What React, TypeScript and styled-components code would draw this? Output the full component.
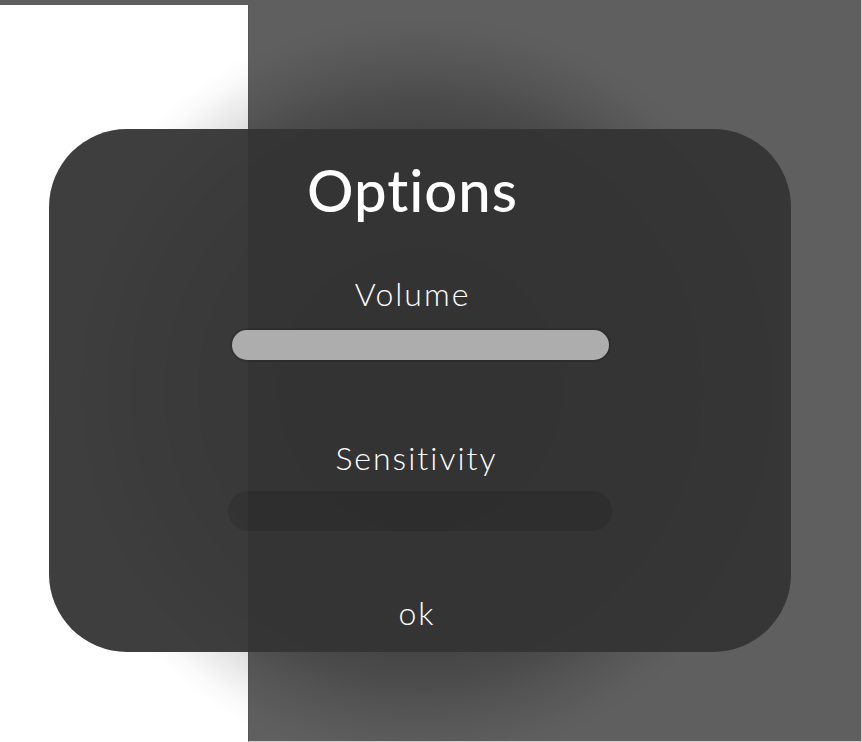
import React from "react";
import styled, { createGlobalStyle } from "styled-components";

const Global = createGlobalStyle`
  html, body { margin: 0; padding: 0; background: #ffffff; }
  body { font-family: "Lato", "Noto Sans", sans-serif; }
  * { box-sizing: border-box; }
`;

const Stage = styled.div`
  position: relative;
  width: 862px;
  height: 742px;
  overflow: hidden;
  padding: 129px 0 0 49px;
`;

const Backdrop = styled.div`
  position: absolute;
  left: 248px;
  top: 0;
  width: 614px;
  height: 742px;
  background: #5f5f5f;
  border-left: 1px solid #555555;
  border-right: 1px solid #d2d2d2;
  border-bottom: 1px solid #d2d2d2;
  z-index: 0;
  &::before {
    content: "";
    position: absolute;
    left: -249px;
    top: 0;
    width: 249px;
    height: 5px;
    background: #5f5f5f;
  }
`;

const Glow = styled.div`
  position: absolute;
  left: ${420 - 400}px;
  top: ${390 - 400}px;
  width: 800px;
  height: 800px;
  border-radius: 50%;
  background: radial-gradient(
    circle at center,
    rgba(0, 0, 0, 0.55) 0px,
    rgba(0, 0, 0, 0.36) 220px,
    rgba(0, 0, 0, 0.21) 290px,
    rgba(0, 0, 0, 0.11) 322px,
    rgba(0, 0, 0, 0.02) 360px,
    rgba(0, 0, 0, 0) 378px
  );
  z-index: 1;
  pointer-events: none;
`;

const Dialog = styled.section`
  position: relative;
  z-index: 2;
  width: 742px;
  height: 523px;
  border-radius: 78px;
  background: rgba(52, 52, 52, 0.95);
  display: flex;
  flex-direction: column;
  align-items: center;
  color: #ffffff;
`;

const Title = styled.h1`
  margin: 26px 0 0 -15px;
  font-family: "Lato", sans-serif;
  font-weight: 500;
  font-size: 58px;
  line-height: 70px;
  letter-spacing: 1px;
`;

const Label = styled.div<{ $top: number; $shift: number }>`
  margin-top: ${(p) => p.$top}px;
  margin-left: ${(p) => p.$shift}px;
  font-family: "Lato", sans-serif;
  font-weight: 300;
  font-size: 32px;
  line-height: 40px;
  letter-spacing: 2px;
`;

const Track = styled.div<{ $filled: boolean; $top: number }>`
  margin-top: ${(p) => p.$top}px;
  width: ${(p) => (p.$filled ? 377 : 384)}px;
  height: ${(p) => (p.$filled ? 30 : 40)}px;
  border-radius: 20px;
  background: ${(p) => (p.$filled ? "#adadad" : "rgba(0,0,0,0.1)")};
  box-shadow: ${(p) => (p.$filled ? "0 0 0 2px rgba(0,0,0,0.12)" : "none")};
`;

const OkButton = styled.button`
  margin-top: 62px;
  margin-left: -6px;
  border: none;
  background: transparent;
  color: #ffffff;
  font-family: "Lato", sans-serif;
  font-weight: 300;
  font-size: 32px;
  line-height: 40px;
  letter-spacing: 2px;
  padding: 0;
  cursor: pointer;
`;

export default function App() {
  return (
    <>
      <Global />
      <Stage>
        <Backdrop />
        <Glow />
        <Dialog>
          <Title>Options</Title>
          <Label $top={49} $shift={-15}>Volume</Label>
          <Track $filled $top={16} />
          <Label $top={78} $shift={-7}>Sensitivity</Label>
          <Track $filled={false} $top={13} />
          <OkButton>ok</OkButton>
        </Dialog>
      </Stage>
    </>
  );
}
